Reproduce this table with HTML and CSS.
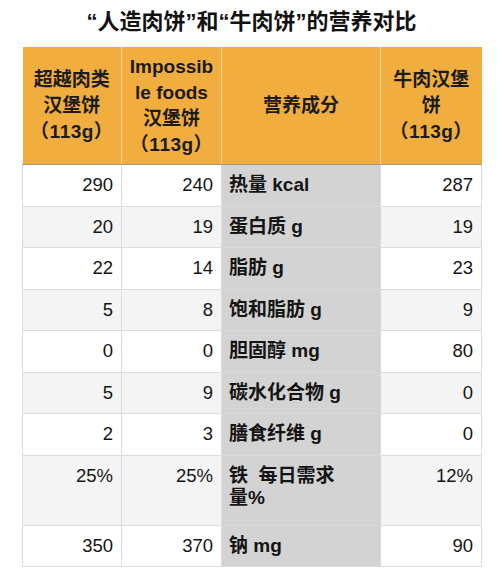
FILE: index.html
```html
<!DOCTYPE html>
<html lang="zh">
<head>
<meta charset="utf-8">
<title>人造肉饼和牛肉饼的营养对比</title>
<link rel="stylesheet" href="styles.css">
</head>
<body>
<div class="page">
  <h1 class="title">“人造肉饼”和“牛肉饼”的营养对比</h1>
  <table class="nutri">
    <colgroup>
      <col class="c1"><col class="c2"><col class="c3"><col class="c4">
    </colgroup>
    <thead>
      <tr>
        <th>超越肉类汉堡饼<span class="g">（113g）</span></th>
        <th><span class="brk">Impossible foods</span>汉堡饼<span class="g">（113g）</span></th>
        <th>营养成分</th>
        <th>牛肉汉堡饼<span class="g">（113g）</span></th>
      </tr>
    </thead>
    <tbody>
      <tr><td>290</td><td>240</td><td class="n">热量 kcal</td><td>287</td></tr>
      <tr><td>20</td><td>19</td><td class="n">蛋白质 g</td><td>19</td></tr>
      <tr><td>22</td><td>14</td><td class="n">脂肪 g</td><td>23</td></tr>
      <tr><td>5</td><td>8</td><td class="n">饱和脂肪 g</td><td>9</td></tr>
      <tr><td>0</td><td>0</td><td class="n">胆固醇 mg</td><td>80</td></tr>
      <tr><td>5</td><td>9</td><td class="n">碳水化合物 g</td><td>0</td></tr>
      <tr><td>2</td><td>3</td><td class="n">膳食纤维 g</td><td>0</td></tr>
      <tr class="tall"><td>25%</td><td>25%</td><td class="n">铁&nbsp; 每日需求<br>量%</td><td>12%</td></tr>
      <tr><td>350</td><td>370</td><td class="n">钠 mg</td><td>90</td></tr>
    </tbody>
  </table>
</div>
</body>
</html>
```
FILE: styles.css
```css
body {
  margin: 0;
  background: #ffffff;
  color: #141414;
  font-family: "Liberation Sans", "Noto Sans CJK SC", sans-serif;
}

.page {
  padding: 8px 16px 0 22px;
}

.title {
  margin: 0 0 11px;
  font-size: 22px;
  line-height: 28px;
  font-weight: bold;
  text-align: center;
  color: #111;
}

.nutri {
  border-collapse: collapse;
  table-layout: fixed;
  width: 459px;
}

.c1 { width: 99px; }
.c2 { width: 100px; }
.c3 { width: 159px; }
.c4 { width: 101px; }

.nutri th {
  height: 117px;
  padding: 0 7px;
  background: #f1ad3d;
  color: #1b1b1b;
  font-size: 19px;
  line-height: 26px;
  font-weight: bold;
  text-align: center;
  vertical-align: middle;
  border-left: 1px solid #f7d7a1;
  border-bottom: 1px solid #a8987e;
}

.nutri th:first-child {
  border-left: none;
}

.brk {
  word-break: break-all;
}

.g {
  display: block;
  white-space: nowrap;
  font-feature-settings: "halt";
  letter-spacing: 0.5px;
}

.nutri td {
  border: 1px solid #dcdcdc;
  padding: 9px 8px 9px;
  font-size: 18.5px;
  line-height: 22.5px;
  text-align: right;
  vertical-align: top;
  background: #ffffff;
  color: #141414;
}

.nutri tbody tr:nth-child(even) td {
  background: #f4f4f4;
}

.nutri td.n,
.nutri tbody tr:nth-child(even) td.n {
  background: #d3d3d3;
  font-weight: bold;
  font-size: 19px;
  text-align: left;
  padding-left: 7px;
  border-color: #d9d9d9;
}

.nutri tr.tall td {
  padding-bottom: 15px;
}
```
